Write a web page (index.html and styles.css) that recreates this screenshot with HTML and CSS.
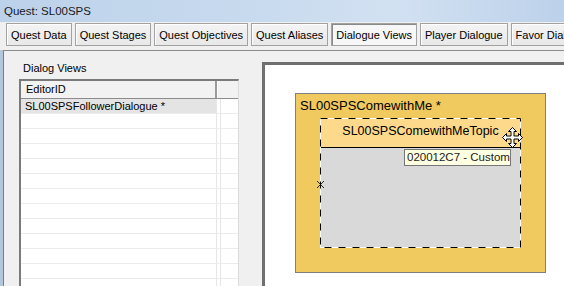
FILE: index.html
```html
<!DOCTYPE html>
<html lang="en">
<head>
    <meta charset="UTF-8">
    <title>Quest: SL00SPS</title>
    <link rel="stylesheet" href="styles.css">
</head>
<body>
    <div class="titlebar">Quest: SL00SPS</div>

    <!-- Pestañas del editor -->
    <div class="tabs">
        <button class="tab">Quest Data</button>
        <button class="tab">Quest Stages</button>
        <button class="tab">Quest Objectives</button>
        <button class="tab">Quest Aliases</button>
        <button class="tab activa">Dialogue Views</button>
        <button class="tab">Player Dialogue</button>
        <button class="tab">Favor Dialogue</button>
    </div>

    <div class="panel">
        <!-- Lista de vistas -->
        <div class="vistas">
            <div class="vistas-label">Dialog Views</div>
            <div class="lista">
                <div class="lista-head">
                    <span class="col-id">EditorID</span>
                    <span class="col-resto"></span>
                </div>
                <div class="fila seleccionada"><span class="col-id">SL00SPSFollowerDialogue *</span><span class="col-resto"></span></div>
                <div class="fila"><span class="col-id"></span><span class="col-resto"></span></div>
                <div class="fila"><span class="col-id"></span><span class="col-resto"></span></div>
                <div class="fila"><span class="col-id"></span><span class="col-resto"></span></div>
                <div class="fila"><span class="col-id"></span><span class="col-resto"></span></div>
                <div class="fila"><span class="col-id"></span><span class="col-resto"></span></div>
                <div class="fila"><span class="col-id"></span><span class="col-resto"></span></div>
                <div class="fila"><span class="col-id"></span><span class="col-resto"></span></div>
                <div class="fila"><span class="col-id"></span><span class="col-resto"></span></div>
                <div class="fila"><span class="col-id"></span><span class="col-resto"></span></div>
                <div class="fila"><span class="col-id"></span><span class="col-resto"></span></div>
                <div class="fila"><span class="col-id"></span><span class="col-resto"></span></div>
                <div class="fila"><span class="col-id"></span><span class="col-resto"></span></div>
            </div>
        </div>

        <!-- Lienzo con los nodos del diálogo -->
        <div class="lienzo">
            <div class="rama">
                <div class="rama-titulo">SL00SPSComewithMe *</div>
                <div class="topico">
                    <div class="topico-head">SL00SPSComewithMeTopic</div>
                    <div class="topico-body"></div>
                    <svg class="topico-borde" width="201" height="130">
                        <rect x="0.5" y="0.5" width="200" height="129" fill="none" stroke="#000" stroke-dasharray="7 7"/>
                    </svg>
                </div>
            </div>
            <div class="tooltip">020012C7 - Custom</div>
            <svg class="cursor-mover" width="21" height="21" viewBox="0 0 21 21">
                <path d="M10.5 0.5 L14.5 4.5 L12 4.5 L12 9 L16.5 9 L16.5 6.5 L20.5 10.5 L16.5 14.5 L16.5 12 L12 12 L12 16.5 L14.5 16.5 L10.5 20.5 L6.5 16.5 L9 16.5 L9 12 L4.5 12 L4.5 14.5 L0.5 10.5 L4.5 6.5 L4.5 9 L9 9 L9 4.5 L6.5 4.5 Z" fill="#fff" stroke="#000" stroke-width="1"/>
            </svg>
            <svg class="cursor-x" width="9" height="9" viewBox="0 0 9 9">
                <path d="M1 1 L8 8 M8 1 L1 8" stroke="#000" stroke-width="0.8"/>
            </svg>
        </div>
    </div>
</body>
</html>
```

FILE: styles.css
```css
body {
    margin: 0;
    width: 564px;
    height: 286px;
    overflow: hidden;
    background: #f0f0f0;
    font-family: "Liberation Sans", Arial, sans-serif;
    font-size: 11px;
    color: #000;
}
.titlebar {
    height: 22px;
    line-height: 22px;
    padding-left: 4px;
    font-size: 11.5px;
    color: #1a1a1a;
    background: linear-gradient(to right, #bcd2ea, #c8daee 45%, #d2e1f2 70%, #bcd1ea);
}
.tabs {
    display: flex;
    gap: 3px;
    height: 28px;
    padding: 1px 0 0 6px;
    box-sizing: border-box;
    white-space: nowrap;
    overflow: hidden;
}
.tab {
    flex: none;
    height: 23px;
    padding: 0 4px;
    font-family: inherit;
    font-size: 11px;
    color: #000;
    background: linear-gradient(#f4f4f4, #e8e8e8);
    border: 1px solid #a2a2a2;
    box-shadow: inset 1px 1px #fff;
}
.tab.activa {
    background: #f7f7f7;
    box-shadow: inset 1px 1px #8a8a8a;
}
.panel {
    display: flex;
    align-items: flex-start;
    height: 236px;
    overflow: hidden;
    margin-left: 3px;
    border-top: 1px solid #8c8c8c;
    border-left: 1px solid #7c7c7c;
    box-shadow: -3px 0 #b4c6d9;
}
.vistas {
    flex: none;
    width: 220px;
    margin-left: 15px;
    padding-top: 10px;
}
.vistas-label {
    height: 14px;
    line-height: 14px;
    margin: 0 0 4px 4px;
}
.lista {
    background: #fff;
    border-top: 2px solid #7a7a7a;
    border-left: 2px solid #7a7a7a;
    border-right: 1px solid #dcdcdc;
}
.lista-head {
    display: flex;
    height: 17px;
    line-height: 16px;
    background: #f2f2f2;
    border-bottom: 1px solid #8c8c8c;
}
.lista-head .col-id {
    padding-left: 5px;
    border-right: 2px solid #9a9a9a;
}
.lista-head .col-resto {
    margin-left: 0;
    border-left: 1px solid #fff;
}
.col-id {
    flex: none;
    width: 196px;
    box-sizing: border-box;
    padding-left: 4px;
    border-right: 1px solid #e6e6e6;
}
.col-resto {
    flex: 1;
    margin-left: 3px;
    border-left: 1px solid #e6e6e6;
}
.fila {
    display: flex;
    height: 14px;
    line-height: 14px;
    border-bottom: 1px solid #ececec;
}
.fila.seleccionada .col-id {
    background: #e4e4e4;
}
.lienzo {
    position: relative;
    flex: 1;
    height: 222px;
    margin: 11px 0 0 23px;
    background: #fff;
    border-top: 3px solid #6f6f6f;
    border-left: 3px solid #6f6f6f;
}
.rama {
    position: absolute;
    left: 30px;
    top: 28px;
    width: 251px;
    height: 180px;
    box-sizing: border-box;
    background: #f0c95f;
    border: 1px solid #7f7f7f;
}
.rama-titulo {
    padding: 4px 0 0 4px;
    font-size: 13px;
    line-height: 15px;
}
.topico {
    position: absolute;
    left: 24px;
    top: 24px;
    width: 201px;
    height: 130px;
    box-sizing: border-box;
    border: 1px solid #fff;
    background: #d9d9d9;
}
.topico-head {
    height: 28px;
    line-height: 24px;
    text-align: center;
    font-size: 12.5px;
    background: #fcd98b;
    border-bottom: 1px solid #000;
}
.topico-borde {
    position: absolute;
    left: -1px;
    top: -1px;
}
.tooltip {
    position: absolute;
    left: 139px;
    top: 84px;
    width: 107px;
    height: 17px;
    box-sizing: border-box;
    padding-left: 2px;
    line-height: 15px;
    font-size: 11.5px;
    color: #222;
    background: #ffffe1;
    border: 1px solid #767676;
    white-space: nowrap;
}
.cursor-mover {
    position: absolute;
    left: 237px;
    top: 62px;
}
.cursor-x {
    position: absolute;
    left: 51px;
    top: 115px;
}
```
